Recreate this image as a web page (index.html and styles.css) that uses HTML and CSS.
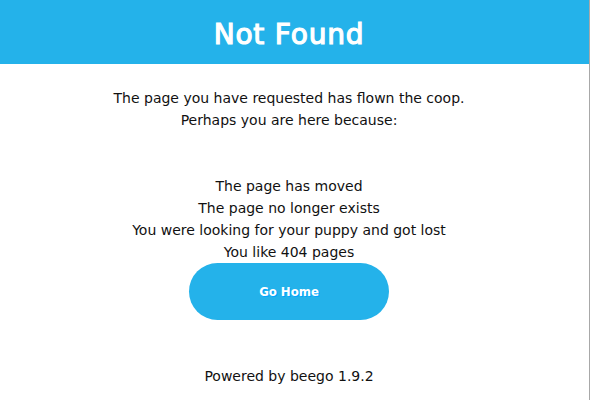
FILE: index.html
```html
<!DOCTYPE html>
<html>
<head>
<meta charset="utf-8">
<title>Not Found</title>
<link rel="stylesheet" href="styles.css">
</head>
<body>
<div class="wrapper">
  <div class="navtop"><h1>Not Found</h1></div>
  <div class="content">
    <p class="intro">The page you have requested has flown the coop.<br>Perhaps you are here because:</p>
    <ul class="reasons">
      <li>The page has moved</li>
      <li>The page no longer exists</li>
      <li>You were looking for your puppy and got lost</li>
      <li>You like 404 pages</li>
    </ul>
    <a class="button" href="/">Go Home</a>
  </div>
  <div class="footer">Powered by beego 1.9.2</div>
</div>
</body>
</html>
```

FILE: styles.css
```css
* { margin: 0; padding: 0; box-sizing: border-box; }
html, body { background: #ffffff; }
body {
  font-family: "DejaVu Sans", sans-serif;
  font-size: 14px;
  color: #111;
}
.wrapper {
  width: 590px;
  min-height: 400px;
  border-right: 1px solid #a8a8a8;
  text-align: center;
  display: flex;
  flex-direction: column;
}
.navtop {
  height: 64px;
  padding: 5px 11px 0 0;
  background: #24b2ea;
  display: flex;
  align-items: center;
  justify-content: center;
}
.navtop h1 {
  color: #fff;
  font-family: "DejaVu Sans", sans-serif;
  font-size: 28px;
  font-weight: normal;
  letter-spacing: 0.8px;
  -webkit-text-stroke: 1.2px #fff;
}
.content {
  padding: 23px 11px 0 0;
  line-height: 22px;
}
.intro { margin-bottom: 44px; }
.reasons { list-style: none; }
.button {
  display: flex;
  align-items: center;
  justify-content: center;
  width: 200px;
  height: 57px;
  margin: 0 auto;
  border-radius: 100px;
  background: #24b2ea;
  color: #fff;
  font-family: "DejaVu Sans Condensed", "DejaVu Sans", sans-serif;
  font-weight: bold;
  font-size: 13px;
  text-decoration: none;
  text-shadow: 1px 1px 0 #00a5ff;
}
.footer {
  margin-top: 45px;
  padding-right: 11px;
  line-height: 22px;
}
```
